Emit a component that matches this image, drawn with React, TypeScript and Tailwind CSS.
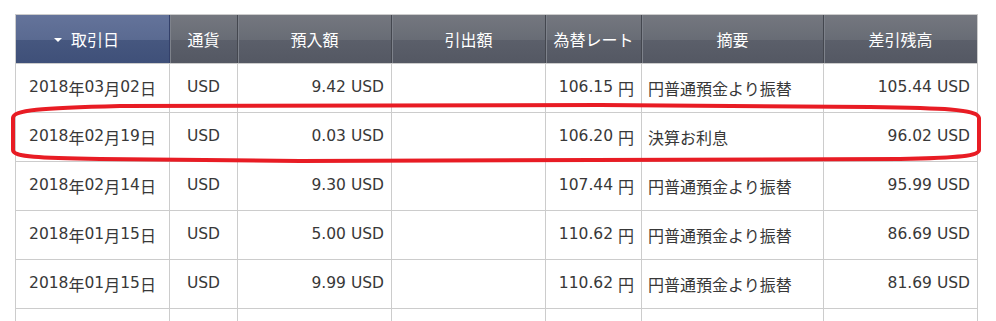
import React from "react";

const rows: string[][] = [
  ["2018年03月02日", "USD", "9.42 USD", "", "106.15 円", "円普通預金より振替", "105.44 USD"],
  ["2018年02月19日", "USD", "0.03 USD", "", "106.20 円", "決算お利息", "96.02 USD"],
  ["2018年02月14日", "USD", "9.30 USD", "", "107.44 円", "円普通預金より振替", "95.99 USD"],
  ["2018年01月15日", "USD", "5.00 USD", "", "110.62 円", "円普通預金より振替", "86.69 USD"],
  ["2018年01月15日", "USD", "9.99 USD", "", "110.62 円", "円普通預金より振替", "81.69 USD"],
  ["", "", "", "", "", "", ""],
];

const align = [
  "justify-center",
  "justify-center",
  "justify-end pr-[7px]",
  "justify-end pr-[7px]",
  "justify-end pr-[7px]",
  "justify-start pl-[6px]",
  "justify-end pr-[7px]",
];

function Mixed({ text }: { text: string }) {
  const parts = text.match(/[\x00-\x7F]+|[^\x00-\x7F]+/g) ?? [];
  return (
    <>
      {parts.map((p, i) =>
        /^[\x00-\x7F]/.test(p) ? (
          <span key={i} className="[font-family:'DejaVu_Sans',sans-serif] text-[15.5px] whitespace-pre">
            {p}
          </span>
        ) : (
          <span key={i} className="[font-family:'Noto_Sans_CJK_JP',sans-serif] text-[16px]">
            {p}
          </span>
        )
      )}
    </>
  );
}

const headers = ["取引日", "通貨", "預入額", "引出額", "為替レート", "摘要", "差引残高"];

export default function App() {
  return (
    <div className="relative w-[996px] h-[321px] overflow-hidden bg-white">
      <div className="pt-[14px] pl-[15px]">
        <div className="w-[963px] border-l border-t border-[#cccccc]">
          <div className="grid grid-cols-[154px_68px_154px_154px_96px_182px_154px] h-[49px] border-b border-[#cccccc]">
            {headers.map((h, i) => (
              <div
                key={i}
                className={
                  "flex items-center justify-center h-[48px] text-white [font-family:'Noto_Sans_CJK_JP',sans-serif] text-[16px] leading-none " +
                  (i === 0
                    ? "pr-[12px] bg-[linear-gradient(to_bottom,#64739a_0%,#5a6a91_52%,#46577f_52%,#3f5079_100%)] border-r border-[#33406a]"
                    : i === 6
                    ? "bg-[linear-gradient(to_bottom,#74777f_0%,#686c75_52%,#5b5f6a_52%,#545863_100%)] border-r border-[#cccccc] shadow-[inset_1px_0_0_#7e828b]"
                    : "bg-[linear-gradient(to_bottom,#74777f_0%,#686c75_52%,#5b5f6a_52%,#545863_100%)] border-r border-[#44474f] shadow-[inset_1px_0_0_#7e828b]")
                }
              >
                {i === 0 && (
                  <svg width="8" height="4" viewBox="0 0 8 4" className="mr-[9px] mt-[1px]">
                    <path d="M0 0 L8 0 L4 4 Z" fill="#ffffff" />
                  </svg>
                )}
                {h}
              </div>
            ))}
          </div>
          {rows.map((r, ri) => (
            <div
              key={ri}
              className="grid grid-cols-[154px_68px_154px_154px_96px_182px_154px] h-[49px] border-b border-[#cccccc]"
            >
              {r.map((c, ci) => (
                <div
                  key={ci}
                  className={
                    "flex items-center h-[48px] border-r border-[#cccccc] text-[#383838] leading-none " +
                    align[ci]
                  }
                >
                  <Mixed text={c} />
                </div>
              ))}
            </div>
          ))}
        </div>
      </div>
      <svg
        className="absolute left-0 top-0 pointer-events-none"
        width="996"
        height="321"
        viewBox="0 0 996 321"
      >
        <path
          d="M 13 118 C 13 110, 40 108, 120 106 L 600 105 L 870 107 C 940 108, 978 109, 979 118 L 979 150 C 979 156, 960 158, 900 159 L 300 161 L 100 159 C 40 158, 13 157, 13 150 Z"
          fill="none"
          stroke="#e81c24"
          strokeWidth="4"
          strokeLinejoin="round"
        />
      </svg>
    </div>
  );
}
